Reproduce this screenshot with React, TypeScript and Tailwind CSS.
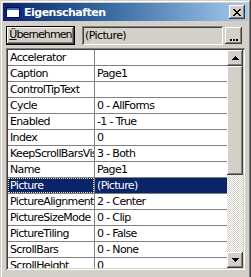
import React from "react";

const rows: [string, string][] = [
  ["Accelerator", ""],
  ["Caption", "Page1"],
  ["ControlTipText", ""],
  ["Cycle", "0 - AllForms"],
  ["Enabled", "-1 - True"],
  ["Index", "0"],
  ["KeepScrollBarsVisible", "3 - Both"],
  ["Name", "Page1"],
  ["Picture", "(Picture)"],
  ["PictureAlignment", "2 - Center"],
  ["PictureSizeMode", "0 - Clip"],
  ["PictureTiling", "0 - False"],
  ["ScrollBars", "0 - None"],
  ["ScrollHeight", "0"],
];

const raised =
  "bg-[#d4d0c8] shadow-[inset_-1px_-1px_#404040,inset_1px_1px_#ffffff,inset_-2px_-2px_#808080,inset_2px_2px_#d4d0c8]";

function Arrow({ up }: { up?: boolean }) {
  return (
    <svg width="7" height="4" viewBox="0 0 7 4" shapeRendering="crispEdges">
      {up ? (
        <path d="M3 0h1v1h1v1h1v1h1v1H0V3h1V2h1V1h1z" fill="#000" />
      ) : (
        <path d="M0 0h7v1H6v1H5v1H4v1H3V3H2V2H1V1H0z" fill="#000" />
      )}
    </svg>
  );
}

export default function App() {
  return (
    <div
      className="w-[251px] h-[277px] overflow-hidden"
      style={{ fontFamily: '"DejaVu Sans", Verdana, sans-serif' }}
    >
      <div className="w-[251px] h-[284px] p-[3px] bg-[#d4d0c8] shadow-[inset_-1px_-1px_#404040,inset_1px_1px_#d4d0c8,inset_-2px_-2px_#808080,inset_2px_2px_#ffffff]">
        {/* Title bar */}
        <div className="h-[18px] flex items-center bg-linear-to-r from-[#0a246a] via-[#3a6ea5] via-45% to-[#a6caf0]">
          <div className="ml-[3px] w-[14px] h-[11px]">
            <svg width="14" height="11" viewBox="0 0 14 11" shapeRendering="crispEdges">
              <rect x="0" y="0" width="14" height="11" fill="#ffffff" />
              <rect x="0" y="0" width="14" height="3" fill="#3a6ea5" />
              <rect x="0.5" y="0.5" width="13" height="10" fill="none" stroke="#000080" />
            </svg>
          </div>
          <span className="ml-[4px] text-white font-bold text-[11px] leading-none tracking-[-0.5px]">
            Eigenschaften
          </span>
          <div className="flex-1" />
          <div className={`mr-[3px] w-[16px] h-[14px] flex items-center justify-center ${raised}`}>
            <svg width="8" height="7" viewBox="0 0 8 7" shapeRendering="crispEdges">
              <path
                d="M0 0h2v1h1v1h2V1h1V0h2v1H7v1H6v1H5v1h1v1h1v1h1v1H6V6H5V5H3v1H2v1H0V6h1V5h1V4h1V3H2V2H1V1H0z"
                fill="#000"
              />
            </svg>
          </div>
        </div>

        {/* Toolbar */}
        <div className="mt-[5px] ml-[3px] flex items-start h-[19px]">
          <div className="w-[69px] h-[19px] border border-black">
            <div
              className={`w-full h-full flex items-center justify-center text-[11px] tracking-[-0.9px] text-black ${raised}`}
            >
              <span>
                <span className="underline underline-offset-[1px]">Ü</span>bernehmen
              </span>
            </div>
          </div>
          <div className="ml-[7px] w-[141px] h-[19px] p-[2px] bg-[#d4d0c8] shadow-[inset_1px_1px_#808080,inset_-1px_-1px_#ffffff,inset_2px_2px_#404040,inset_-2px_-2px_#d4d0c8]">
            <div className="pl-[1px] text-[11px] tracking-[-0.6px] leading-[15px] text-black">(Picture)</div>
          </div>
          <div
            className={`ml-[2px] mt-[1px] w-[17px] h-[17px] flex items-end justify-center pb-[3px] ${raised}`}
          >
            <svg width="8" height="2" viewBox="0 0 8 2" shapeRendering="crispEdges">
              <rect x="0" y="0" width="2" height="2" fill="#000" />
              <rect x="3" y="0" width="2" height="2" fill="#000" />
              <rect x="6" y="0" width="2" height="2" fill="#000" />
            </svg>
          </div>
        </div>

        {/* Grid */}
        <div className="mt-[3px] ml-[3px] w-[239px] h-[222px] p-[2px] bg-[#d4d0c8] shadow-[inset_1px_1px_#808080,inset_-1px_-1px_#ffffff,inset_2px_2px_#404040,inset_-2px_-2px_#d4d0c8]">
          <div className="flex h-[218px]">
            <div className="flex-1 bg-white overflow-hidden text-[11px] tracking-[-0.65px] text-black">
              {rows.map(([name, value]) => {
                const sel = name === "Picture";
                return (
                  <div key={name} className="flex h-[16px] border-b border-[#808080]">
                    <div
                      className={`w-[87px] shrink-0 overflow-hidden whitespace-nowrap border-r border-[#808080] ${
                        sel ? "bg-[#0a246a] text-white" : ""
                      }`}
                    >
                      <div
                        className={`h-full pl-[2px] leading-[15px] ${
                          sel ? "outline-1 outline-dotted outline-[#f0e68c] -outline-offset-1" : ""
                        }`}
                      >
                        {name}
                      </div>
                    </div>
                    <div
                      className={`flex-1 pl-[2px] leading-[15px] whitespace-nowrap overflow-hidden ${
                        sel ? "bg-[#0a246a] text-white" : ""
                      }`}
                    >
                      {value}
                    </div>
                  </div>
                );
              })}
            </div>
            {/* Scrollbar */}
            <div className="w-[16px] flex flex-col">
              <div className={`h-[16px] flex items-center justify-center ${raised}`}>
                <Arrow up />
              </div>
              <div className={`h-[109px] ${raised}`} />
              <div className="flex-1 bg-[repeating-conic-gradient(#ffffff_0%_25%,#d4d0c8_0%_50%)] bg-size-[2px_2px]" />
              <div className={`h-[16px] flex items-center justify-center ${raised}`}>
                <Arrow />
              </div>
            </div>
          </div>
        </div>
      </div>
    </div>
  );
}
